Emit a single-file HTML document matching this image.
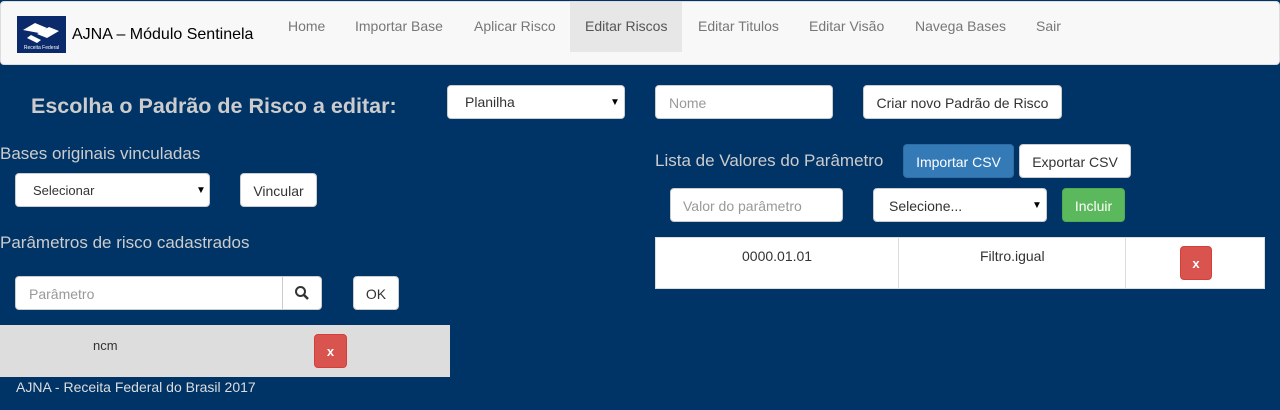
<!DOCTYPE html>
<html><head><meta charset="utf-8"><style>
*{box-sizing:border-box;margin:0;padding:0}
body{width:1280px;height:410px;background:#003366;font-family:"Liberation Sans",sans-serif;font-size:14px;color:#333;position:relative;overflow:hidden}
.a{position:absolute}
.nav{left:0;top:1px;width:1280px;height:64px;background:#f8f8f8;border:1px solid #ddd;border-radius:4px}
.ni{top:18px;color:#777;font-size:14px}
.box{background:#fff;border:1px solid #ccc;border-radius:4px}
.lbl{color:#ccc}
.ph{color:#999}
.btn{background:#fff;border:1px solid #ccc;border-radius:4px;text-align:center;color:#333}
.red{background:#d9534f;border:1px solid #d43f3a;border-radius:4px;color:#fff;font-weight:bold;text-align:center}
.arr{font-size:10px;color:#000}
</style></head><body>
<div class="a nav"></div>
<div class="a" style="left:570px;top:2px;width:112px;height:50px;background:#e7e7e7"></div>
<div class="a" style="left:17px;top:16px;width:49px;height:37px;background:#0b2a6b">
<svg width="49" height="37" viewBox="0 0 49 37"><path d="M6 14 L18 7 L30 12 L22 17 Z M20 18 L32 11 L42 15 L30 22 Z M14 19 L24 24 L20 27 L10 22 Z" fill="#fff"/><text x="24.5" y="33" font-size="5" fill="#fff" text-anchor="middle" font-family="Liberation Sans">Receita Federal</text></svg></div>
<div class="a" style="left:72px;top:26px;font-size:16px;color:#000">AJNA – Módulo Sentinela</div>
<div class="a ni" style="left:288px">Home</div>
<div class="a ni" style="left:355px">Importar Base</div>
<div class="a ni" style="left:474px">Aplicar Risco</div>
<div class="a ni" style="left:585px;color:#555">Editar Riscos</div>
<div class="a ni" style="left:698px">Editar Titulos</div>
<div class="a ni" style="left:809px">Editar Visão</div>
<div class="a ni" style="left:915px">Navega Bases</div>
<div class="a ni" style="left:1036px">Sair</div>

<div class="a" style="left:31px;top:94px;font-size:21.5px;font-weight:bold;color:#ccc">Escolha o Padrão de Risco a editar:</div>
<div class="a box" style="left:447px;top:85px;width:178px;height:34px"><span class="a" style="left:17px;top:8px">Planilha</span><span class="a arr" style="left:162px;top:11px">▼</span></div>
<div class="a box" style="left:655px;top:85px;width:178px;height:34px"><span class="a ph" style="left:13px;top:9px">Nome</span></div>
<div class="a btn" style="left:863px;top:85px;width:199px;height:34px;padding-top:9px">Criar novo Padrão de Risco</div>

<div class="a lbl" style="left:0;top:144px;font-size:17px">Bases originais vinculadas</div>
<div class="a box" style="left:15px;top:173px;width:195px;height:34px"><span class="a" style="left:17px;top:9px;font-size:13px">Selecionar</span><span class="a arr" style="left:180px;top:11px">▼</span></div>
<div class="a btn" style="left:240px;top:173px;width:77px;height:34px;padding-top:9px">Vincular</div>
<div class="a lbl" style="left:0;top:233px;font-size:17px">Parâmetros de risco cadastrados</div>
<div class="a box" style="left:15px;top:276px;width:307px;height:34px"><span class="a ph" style="left:13px;top:9px">Parâmetro</span></div>
<div class="a" style="left:282px;top:277px;width:1px;height:32px;background:#ccc"></div>
<svg class="a" style="left:294px;top:285px" width="16" height="16" viewBox="0 0 16 16"><circle cx="6.5" cy="6.5" r="4.5" fill="none" stroke="#333" stroke-width="2"/><path d="M10 10 L14 14" stroke="#333" stroke-width="2.5"/></svg>
<div class="a btn" style="left:353px;top:276px;width:46px;height:34px;padding-top:9px">OK</div>
<div class="a" style="left:0;top:325px;width:450px;height:52px;background:#ddd"></div>
<div class="a" style="left:93px;top:338px;font-size:13px">ncm</div>
<div class="a red" style="left:314px;top:334px;width:33px;height:34px;padding-top:9px;font-size:13px">x</div>
<div class="a" style="left:16px;top:379px;font-size:14px;color:#ddd">AJNA - Receita Federal do Brasil 2017</div>

<div class="a lbl" style="left:655px;top:151px;font-size:17px">Lista de Valores do Parâmetro</div>
<div class="a" style="left:903px;top:144px;width:111px;height:34px;background:#337ab7;border:1px solid #2e6da4;border-radius:4px;color:#fff;text-align:center;padding-top:9px">Importar CSV</div>
<div class="a btn" style="left:1019px;top:144px;width:112px;height:34px;padding-top:9px">Exportar CSV</div>
<div class="a box" style="left:670px;top:188px;width:173px;height:34px"><span class="a ph" style="left:12px;top:9px">Valor do parâmetro</span></div>
<div class="a box" style="left:873px;top:188px;width:174px;height:34px"><span class="a" style="left:15px;top:9px">Selecione...</span><span class="a arr" style="left:158px;top:11px">▼</span></div>
<div class="a" style="left:1062px;top:188px;width:63px;height:34px;background:#5cb85c;border:1px solid #4cae4c;border-radius:4px;color:#fff;text-align:center;padding-top:9px">Incluir</div>
<div class="a" style="left:655px;top:237px;width:610px;height:52px;background:#fff;border:1px solid #ddd"></div>
<div class="a" style="left:898px;top:238px;width:1px;height:50px;background:#ddd"></div>
<div class="a" style="left:1125px;top:238px;width:1px;height:50px;background:#ddd"></div>
<div class="a" style="left:742px;top:248px">0000.01.01</div>
<div class="a" style="left:980px;top:248px">Filtro.igual</div>
<div class="a red" style="left:1180px;top:246px;width:32px;height:34px;padding-top:9px;font-size:13px">x</div>
</body></html>
